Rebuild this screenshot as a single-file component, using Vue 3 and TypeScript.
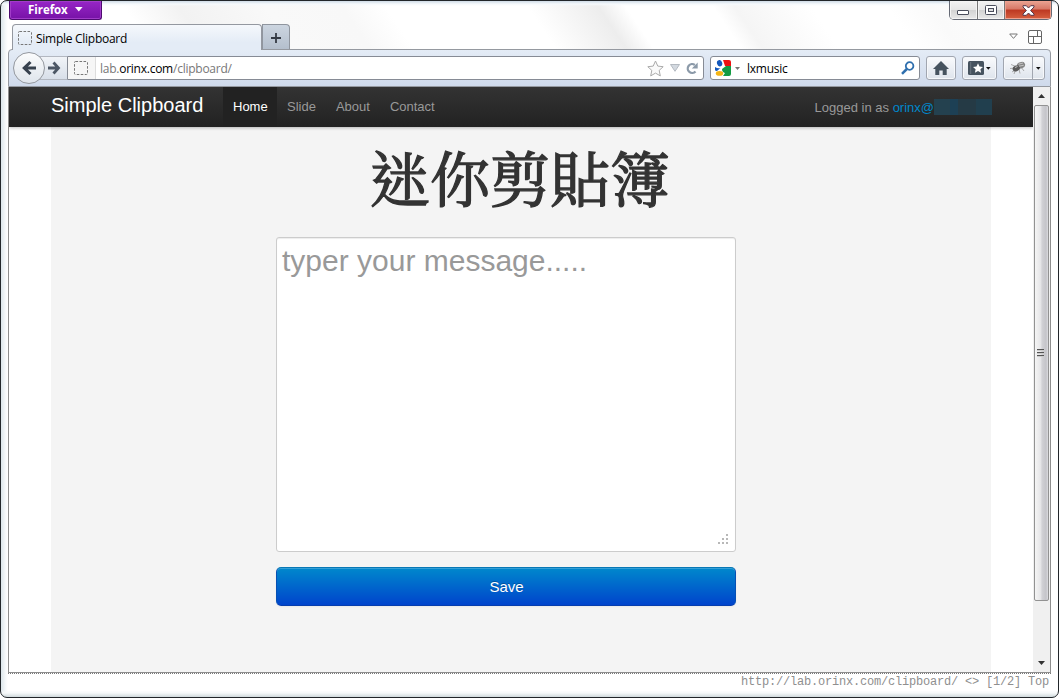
<script setup lang="ts">
import { ref } from 'vue'

interface NavItem {
  label: string
  active: boolean
}

const title = 'Simple Clipboard'
const nav: NavItem[] = [
  { label: 'Home', active: true },
  { label: 'Slide', active: false },
  { label: 'About', active: false },
  { label: 'Contact', active: false },
]
const message = ref('')
</script>

<template>
  <div class="window">
    <header class="titlebar">
      <div class="app-button">
        Firefox
        <svg width="8" height="5" viewBox="0 0 8 5"><path d="M0 0H7.6L3.8 4.4Z" fill="#fff" /></svg>
      </div>
      <div class="controls">
        <span class="ctl min">
          <svg width="13" height="7" viewBox="0 0 13 7"><rect x=".5" y="1.5" width="11" height="4" rx=".5" fill="#fff" stroke="#4b4e5c" /></svg>
        </span>
        <span class="ctl max">
          <svg width="12" height="10" viewBox="0 0 12 10"><rect x=".5" y=".5" width="11" height="9" rx="1" fill="#fff" stroke="#4b4e5c" /><rect x="3.5" y="3.5" width="5" height="3" fill="#ddd" stroke="#4b4e5c" /></svg>
        </span>
        <span class="ctl close">
          <svg width="13" height="11" viewBox="0 0 13 11"><path d="M1 .7H4.3L6.5 3 8.7.7H12V2L8.6 5.5 12 9V10.3H8.7L6.5 8 4.3 10.3H1V9L4.4 5.5 1 2Z" fill="#fff" stroke="#56384a" stroke-width="1" /></svg>
        </span>
      </div>
    </header>

    <div class="tabs">
      <div class="tab">
        <svg class="blank" width="14" height="14" viewBox="0 0 14 14"><rect x=".5" y=".5" width="13" height="13" rx="1" fill="none" stroke="#777" stroke-dasharray="2.6 1.4" /></svg>
        <span>{{ title }}</span>
      </div>
      <div class="new-tab">
        <svg width="10" height="10" viewBox="0 0 10 10"><path d="M5 0V10M0 5H10" stroke="#343a44" stroke-width="1.8" /></svg>
      </div>
      <div class="tab-tools">
        <svg width="9" height="7" viewBox="0 0 9 7"><path d="M.7 1H8.3L4.5 5.4Z" fill="#fff" stroke="#777" /></svg>
        <svg width="14" height="14" viewBox="0 0 14 14"><rect x=".5" y=".5" width="13" height="13" rx="1.5" fill="#fff" stroke="#666" /><path d="M.5 6.5H13.5M9.5 .5V6.5M5.5 6.5V13.5" fill="none" stroke="#666" /></svg>
      </div>
    </div>

    <div class="toolbar">
      <div class="back">
        <svg width="16" height="16" viewBox="0 0 16 16"><path d="M9.5 2L3.3 8L9.5 14M3.5 8H15" fill="none" stroke="#37424f" stroke-width="3.1" /></svg>
      </div>
      <div class="forward">
        <svg width="13" height="14" viewBox="0 0 13 14"><path d="M5.5 1.5L10.5 7L5.5 12.5M0 7H10" fill="none" stroke="#4c5765" stroke-width="2.8" /></svg>
      </div>
      <div class="address">
        <div class="identity">
          <svg width="14" height="14" viewBox="0 0 14 14"><rect x=".5" y=".5" width="13" height="13" rx="1" fill="none" stroke="#777" stroke-dasharray="2.6 1.4" /></svg>
        </div>
        <span class="url">lab.<b>orinx.com</b>/clipboard/</span>
        <div class="address-icons">
          <svg width="17" height="17" viewBox="0 0 17 17"><path d="M8.5 1L10.8 6.1 16.2 6.7 12.2 10.4 13.3 15.9 8.5 13.1 3.7 15.9 4.8 10.4 .8 6.7 6.2 6.1Z" fill="#fafafa" stroke="#aaa" stroke-linejoin="round" /></svg>
          <svg width="10" height="8" viewBox="0 0 10 8"><path d="M.5 .5H9.5L5 7.3Z" fill="#d3d9e0" stroke="#b4bac1" /></svg>
          <svg width="12" height="13" viewBox="0 0 12 13"><path d="M8.8 3A4.4 4.4 0 1 0 9.5 9.4" fill="none" stroke="#8c9aa9" stroke-width="2.3" /><path d="M11.7 .5V6.5H5.8Z" fill="#8c9aa9" /></svg>
        </div>
      </div>
      <div class="search">
        <svg width="16" height="16" viewBox="0 0 16 16">
          <path d="M8 0H14Q16 0 16 2V6H10Z" fill="#ed1111" />
          <path d="M16 6V14Q16 16 14 16H8L10 13Q7 12 7 9L11 6Z" fill="#139b43" />
          <ellipse cx="4.6" cy="3.2" rx="2.6" ry="3.2" transform="rotate(-18 4.6 3.2)" fill="#1559bd" />
          <path d="M0 7Q3 9 5.5 8L2 11Q0 11 0 10Z" fill="#1559bd" />
          <ellipse cx="4.5" cy="13.4" rx="3.7" ry="2.4" fill="#f4b517" />
        </svg>
        <svg class="drop" width="5" height="3" viewBox="0 0 5 3"><path d="M0 0H5L2.5 3Z" fill="#777" /></svg>
        <span>lxmusic</span>
        <svg class="glass" width="14" height="14" viewBox="0 0 14 14"><circle cx="8.6" cy="5" r="3.8" fill="none" stroke="#2f6fae" stroke-width="1.8" /><path d="M5.8 8L1 12.8" stroke="#2f6fae" stroke-width="2.5" /></svg>
      </div>
      <div class="tool home">
        <svg width="16" height="14" viewBox="0 0 16 14"><path d="M8 0L16 8H13.7V14H9.7V9.5H6.3V14H2.3V8H0Z" fill="#46535f" /></svg>
      </div>
      <div class="tool marks">
        <svg width="17" height="14" viewBox="0 0 17 14"><rect width="16" height="14" rx="1.5" fill="#46535f" /><path d="M2.7 1V13" stroke="#6c7781" /><path d="M10 2.2L11.5 5.5 15 5.9 12.4 8.2 13.1 11.7 10 9.9 6.9 11.7 7.6 8.2 5 5.9 8.5 5.5Z" fill="#fff" /></svg>
        <svg width="5" height="3" viewBox="0 0 5 3"><path d="M0 0H4.6L2.3 2.8Z" fill="#111" /></svg>
      </div>
      <div class="tool bug">
        <span class="bug-icon">
          <svg width="16" height="14" viewBox="0 0 16 14">
            <path d="M1 3.5L6 5.5M0 7.5L5 7M4 13L6 8M10 12.5L9 8M14 10L11 6M2 11L5 9" fill="none" stroke="#999" stroke-width=".8" />
            <ellipse cx="11" cy="4.2" rx="4.2" ry="3.2" transform="rotate(-18 11 4.2)" fill="#858585" />
            <ellipse cx="6.3" cy="7.4" rx="3.8" ry="2.8" transform="rotate(-25 6.3 7.4)" fill="#5b5b5b" />
            <path d="M8.5 3.2L13 2M9 5.2L13.8 4.2M5 6.5L7.5 5.5" stroke="#ccc" stroke-width=".9" />
          </svg>
        </span>
        <span class="bug-drop"><svg width="5" height="3" viewBox="0 0 5 3"><path d="M0 0H4.6L2.3 2.8Z" fill="#111" /></svg></span>
      </div>
    </div>

    <div class="viewport">
      <main class="page">
        <nav class="navbar">
          <span class="brand">{{ title }}</span>
          <ul>
            <li v-for="item in nav" :key="item.label" :class="{ active: item.active }">{{ item.label }}</li>
          </ul>
          <p class="login">Logged in as <span class="user">orinx@<i class="mask"><em class="m1"></em><em class="m2"></em><em class="m3"></em><em class="m4"></em></i></span></p>
        </nav>
        <section class="container">
          <h1>迷你剪貼簿</h1>
          <form class="clip-form" @submit.prevent>
            <div class="field">
              <textarea v-model="message" placeholder="typer your message....."></textarea>
              <svg class="grip" width="11" height="11" viewBox="0 0 11 11"><path d="M8 0h2v2h-2zM4 4h2v2h-2zM8 4h2v2h-2zM0 8h2v2h-2zM4 8h2v2h-2zM8 8h2v2h-2z" fill="#b8b8b8" /></svg>
            </div>
            <button type="submit">Save</button>
          </form>
        </section>
      </main>
      <aside class="scrollbar">
        <span class="arrow"><svg width="7" height="4" viewBox="0 0 7 4"><path d="M3.5 0L7 4H0Z" fill="#333" /></svg></span>
        <span class="thumb"><svg width="7" height="8" viewBox="0 0 7 8"><path d="M0 .5H7M0 3.5H7M0 6.5H7" stroke="#555" /><path d="M0 1.5H7M0 4.5H7M0 7.5H7" stroke="#ccc" /></svg></span>
        <span class="arrow down"><svg width="7" height="4" viewBox="0 0 7 4"><path d="M0 0H7L3.5 4Z" fill="#333" /></svg></span>
      </aside>
    </div>
    <footer class="status">http://lab.orinx.com/clipboard/ &lt;&gt; [1/2] Top</footer>
  </div>
</template>

<style>
html,
body {
  margin: 0;
  overflow: hidden;
  background: #fff;
}
</style>

<style scoped>
* {
  box-sizing: border-box;
}
svg {
  display: block;
  flex: none;
}
.window {
  width: 1059px;
  height: 698px;
  border: 1px solid #22262a;
  border-radius: 7px;
  padding: 0 7px;
  display: flex;
  flex-direction: column;
  font: 12px 'Open Sans', 'Noto Sans', sans-serif;
  background:
    linear-gradient(#cfdbe6, #f5f9fc 3px, transparent 5px),
    linear-gradient(0deg, #cfd9dc, #f6f9fa 4px, transparent 7px),
    linear-gradient(90deg, #dce6eb, #f8fafb 5px, transparent 7px),
    linear-gradient(56deg, #fff 0 14%, #f2f2f2 19%, #f9f9f9 27%, #f8f8f8 34%, #fff 38% 51%, #ededed 57.5%, #fff 60% 68%, #f5f5f5 70%, #fff 77% 84%, #fafafa 88%, #fff) 0 0 / 100% 50px no-repeat,
    #fff;
}
.titlebar {
  height: 23px;
  flex: none;
  display: flex;
  justify-content: space-between;
  align-items: flex-start;
  padding: 0 0 0 1px;
}
.app-button {
  width: 93px;
  height: 19px;
  padding: 0 0 1px 18px;
  display: flex;
  align-items: center;
  gap: 7px;
  color: #fff;
  font-weight: 700;
  font-size: 11.5px;
  letter-spacing: -0.05px;
  border: 1px solid #4d0b70;
  border-top: 0;
  border-radius: 0 0 3px 3px;
  background: linear-gradient(#9726c6, #7712a7);
  box-shadow: inset 0 0 0 1px #a13cc9;
}
.controls {
  display: flex;
  width: 103px;
  height: 19px;
  margin-right: -1px;
  border: 1px solid #666a75;
  border-top: 0;
  border-radius: 0 0 5px 5px;
  overflow: hidden;
}
.ctl {
  display: flex;
  align-items: center;
  justify-content: center;
  background: linear-gradient(#f3f3f3, #e6e6e6 48%, #d2d2d2 50%, #e8e8e8);
  box-shadow: inset 0 0 0 1px #f4f4f4;
}
.min {
  width: 28px;
  padding-top: 5px;
  border-right: 1px solid #777;
}
.max {
  width: 27px;
  border-right: 1px solid #777;
}
.close {
  flex: 1;
  background: linear-gradient(#e9a393, #d77866 45%, #bd3822 50%, #d6603f);
  box-shadow: inset 0 0 0 1px #efa18f;
}
.tabs {
  height: 25px;
  flex: none;
  display: flex;
  padding-left: 4px;
}
.tab {
  width: 250px;
  height: 26px;
  position: relative;
  z-index: 1;
  display: flex;
  align-items: center;
  gap: 4px;
  padding: 1px 0 0 5px;
  border: 1px solid #9498a0;
  border-bottom: 0;
  border-radius: 4px 4px 0 0;
  background: linear-gradient(#f5f8fc, #e4ecf6 70%);
  color: #000;
  letter-spacing: -0.27px;
}
.new-tab {
  width: 28px;
  display: flex;
  align-items: center;
  justify-content: center;
  border: 1px solid #8f959e;
  border-bottom: 0;
  border-radius: 0 4px 0 0;
  background: linear-gradient(#ccd5e0, #b4bfcd);
  padding-top: 2px;
}
.tab-tools {
  margin-left: auto;
  padding-right: 9px;
  display: flex;
  gap: 10px;
  align-items: center;
}
.toolbar {
  width: 1043px;
  height: 38px;
  flex: none;
  display: flex;
  align-items: center;
  border: 1px solid #9599a0;
  border-radius: 4px 4px 0 0;
  padding: 0 5px 0 4px;
  background: linear-gradient(#e4ecf6, #cfdaeb);
}
.back {
  width: 32px;
  height: 32px;
  position: relative;
  z-index: 1;
  flex: none;
  display: flex;
  align-items: center;
  justify-content: center;
  padding-right: 1px;
  border: 1px solid #94989f;
  border-radius: 50%;
  background: linear-gradient(#fbfcfd, #dfe5ec);
}
.forward {
  width: 30px;
  height: 24px;
  margin-left: -8px;
  flex: none;
  display: flex;
  align-items: center;
  justify-content: flex-end;
  padding-right: 6px;
  border: 1px solid #b3b8c1;
  border-right: 0;
  background: linear-gradient(#f1f4f8, #d8dfe9);
}
.address {
  width: 637px;
  height: 24px;
  flex: none;
  display: flex;
  align-items: center;
  border: 1px solid #868b95;
  border-radius: 0 3px 3px 0;
  background: #fff;
}
.identity {
  width: 28px;
  height: 22px;
  display: flex;
  align-items: center;
  justify-content: center;
  padding-right: 1px;
  border-right: 1px solid #ddd;
  background: #f6f6f6;
}
.url {
  margin-left: 4px;
  color: #777;
  letter-spacing: -0.25px;
}
.url b {
  color: #000;
  font-weight: 400;
}
.address-icons {
  margin-left: auto;
  display: flex;
  align-items: center;
  gap: 6px;
  padding-right: 5px;
}
.search {
  width: 210px;
  height: 24px;
  margin-left: 6px;
  flex: none;
  display: flex;
  align-items: center;
  padding: 0 4px 0 4px;
  border: 1px solid #868b95;
  border-radius: 3px;
  background: #fff;
  color: #000;
  letter-spacing: -0.25px;
}
.drop {
  margin: 0 7px 0 4px;
}
.glass {
  margin-left: auto;
}
.tool {
  height: 24px;
  flex: none;
  display: flex;
  align-items: center;
  justify-content: center;
  border: 1px solid #a1a6b0;
  border-radius: 3px;
  background: linear-gradient(#fafbfd, #dee4ec);
  box-shadow: inset 0 0 0 1px #f6f8fb;
}
.home {
  width: 30px;
  margin-left: 6px;
}
.marks {
  width: 35px;
  margin-left: 6px;
  gap: 1px;
}
.bug {
  width: 42px;
  margin-left: 6px;
}
.bug-icon {
  width: 29px;
  height: 22px;
  display: flex;
  align-items: center;
  justify-content: center;
  border-right: 1px solid #a1a6b0;
}
.bug-drop {
  flex: 1;
  display: flex;
  justify-content: center;
}
.viewport {
  width: 1043px;
  height: 586px;
  flex: none;
  display: flex;
  border: 1px solid #8e8e8e;
  border-top: 0;
  background: #fff;
}
.page {
  width: 1024px;
  height: 585px;
  display: flex;
  flex-direction: column;
  font-family: 'Liberation Sans', sans-serif;
  overflow: hidden;
}
.navbar {
  height: 40px;
  flex: none;
  position: relative;
  z-index: 1;
  display: flex;
  padding: 0 41px 0 42px;
  background: linear-gradient(#333, #222);
  box-shadow: 0 1px 3px rgba(0, 0, 0, 0.25);
  font-size: 13px;
  line-height: 40px;
  color: #999;
}
.brand {
  width: 172px;
  font-size: 20px;
  line-height: 37px;
  color: #fff;
}
.navbar ul {
  display: flex;
  margin: 0;
  padding: 0;
  list-style: none;
}
.navbar li {
  padding: 0 10px;
}
.navbar li.active {
  width: 54px;
  color: #fff;
  background: #222;
}
.login {
  margin: 0 0 0 auto;
  line-height: 41px;
  display: flex;
  white-space: pre;
}
.user {
  display: flex;
  align-items: center;
  color: #08c;
}
.mask {
  width: 58px;
  height: 16px;
  display: flex;
}
.mask em {
  background: #24414f;
}
.m1 {
  width: 16px;
}
.mask .m2 {
  width: 8px;
  background: #1d4055;
}
.mask .m3 {
  width: 18px;
  background: #253a45;
}
.mask .m4 {
  width: 16px;
  background: #213f4e;
}
.container {
  width: 940px;
  flex: 1;
  margin-left: 42px;
  background: #f4f4f4;
}
h1 {
  margin: 0;
  height: 110px;
  padding-top: 13px;
  color: #333;
  font: 400 60px/72px 'Noto Serif CJK TC', 'Noto Sans CJK TC', serif;
  text-align: center;
  text-indent: -2px;
  -webkit-text-stroke: 1.3px #333;
}
.clip-form {
  width: 460px;
  margin-left: 225px;
  display: flex;
  flex-direction: column;
  gap: 15px;
}
.field {
  position: relative;
  height: 315px;
}
textarea {
  display: block;
  width: 460px;
  height: 315px;
  margin: 0;
  padding: 4px 5px;
  border: 1px solid #ccc;
  border-radius: 3px;
  background: #fff;
  box-shadow: inset 0 1px 1px rgba(0, 0, 0, 0.075);
  font: 30px/38px 'Liberation Sans', sans-serif;
  resize: none;
  outline: 0;
}
textarea::placeholder {
  color: #999;
  opacity: 1;
}
.grip {
  position: absolute;
  right: 7px;
  bottom: 7px;
}
button {
  height: 39px;
  margin: 0;
  padding: 0 0 0 1px;
  border: 1px solid #0656b0;
  border-color: #0878b5 #0650b4 #063eae;
  border-radius: 5px;
  background: linear-gradient(#08c, #04c);
  box-shadow: inset 0 1px 0 rgba(255, 255, 255, 0.2), 0 1px 2px rgba(0, 0, 0, 0.05);
  color: #fff;
  font: 15px 'Liberation Sans', sans-serif;
  text-shadow: 0 -1px 0 rgba(0, 0, 0, 0.25);
}
.scrollbar {
  width: 17px;
  height: 585px;
  padding: 0 1px;
  display: flex;
  flex-direction: column;
  background: #f0f0f0;
}
.arrow {
  height: 18px;
  display: flex;
  align-items: center;
  justify-content: center;
}
.down {
  margin-top: auto;
}
.thumb {
  height: 496px;
  display: flex;
  align-items: center;
  justify-content: center;
  padding-right: 2px;
  border: 1px solid #929292;
  border-radius: 2px;
  background: linear-gradient(90deg, #f5f5f5, #e6e6e8 42%, #d1d1d5 55%, #c4c4c9 85%, #dcdce0);
}
.status {
  height: 18px;
  padding-right: 2px;
  border-top: 1px dotted #777;
  background: #fff;
  color: #8f8f8f;
  font: 12px/16px 'Liberation Mono', monospace;
  letter-spacing: -0.2px;
  text-align: right;
}
</style>
